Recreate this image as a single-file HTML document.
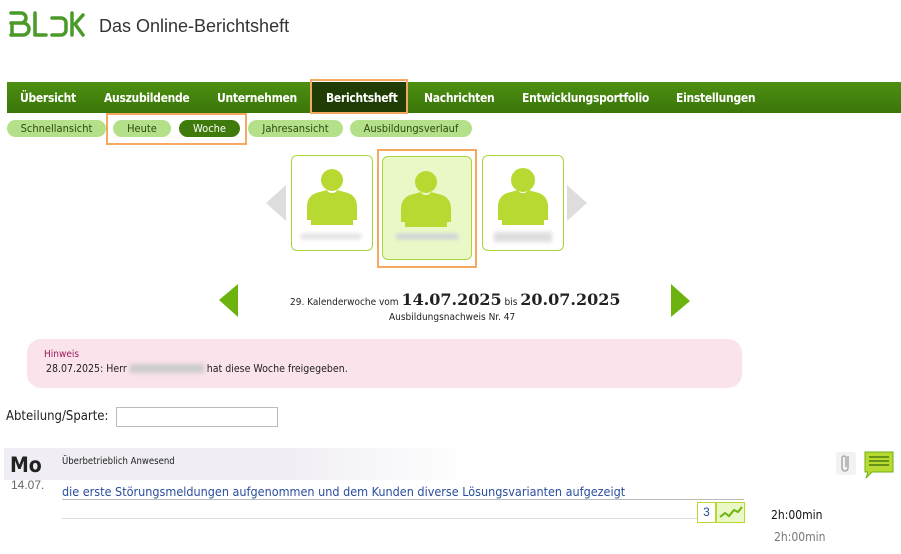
<!DOCTYPE html>
<html><head><meta charset="utf-8"><style>
body{margin:0;width:901px;height:554px;background:#fff;font-family:"DejaVu Sans","Liberation Sans",sans-serif;position:relative;overflow:hidden}
.a{position:absolute}
.nav{left:7px;top:82px;width:894px;height:31px;background:linear-gradient(#4d8f12,#3b760a)}
.nav span{position:absolute;top:9px;color:#fff;font:bold 12px "DejaVu Sans Condensed","Liberation Sans",sans-serif;letter-spacing:-0.3px}
.pill{top:120px;height:17px;border-radius:9px;background:#b5e08a;color:#2c4a10;font:11px "DejaVu Sans Condensed","Liberation Sans",sans-serif;text-align:center;line-height:17px}
.card{border:1px solid #a8d63a;border-radius:6px;background:#fff}
.small{font:10px "DejaVu Sans Condensed","Liberation Sans",sans-serif;color:#222}
</style></head><body>
<svg class="a" style="left:8px;top:11px" width="78" height="26" viewBox="0 0 78 26"><g fill="none" stroke="#4a9a2a" stroke-width="3.5" stroke-linecap="round" stroke-linejoin="round"><path d="M3 2h10a5 5 0 0 1 0 10H3M3 12h12a6 6 0 0 1 0 12H3"/><path d="M4 12v12"/><path d="M27 2v22h11"/><path d="M44 7h9a5 5 0 0 1 5 5v7a5 5 0 0 1-5 5h-9"/><path d="M64 2v22M75 4l-8 9 8 11"/></g></svg>
<div class="a" style="left:99px;top:16px;font:18px 'Liberation Sans',sans-serif;color:#333">Das Online-Berichtsheft</div>
<div class="a nav">
<span style="left:13px">Übersicht</span><span style="left:97px">Auszubildende</span><span style="left:210px">Unternehmen</span>
<span style="left:304px;top:0;height:31px;width:96px;background:#1f3d05"></span><span style="left:319px">Berichtsheft</span>
<span style="left:417px">Nachrichten</span><span style="left:515px">Entwicklungsportfolio</span><span style="left:669px">Einstellungen</span></div>
<div class="a" style="left:310px;top:79px;width:94px;height:31px;border:2px solid #f5a860"></div>
<div class="a pill" style="left:7px;width:99px">Schnellansicht</div>
<div class="a pill" style="left:113px;width:58px">Heute</div>
<div class="a pill" style="left:179px;width:61px;background:#3f7a0c;color:#fff">Woche</div>
<div class="a pill" style="left:248px;width:95px">Jahresansicht</div>
<div class="a pill" style="left:350px;width:122px">Ausbildungsverlauf</div>
<div class="a" style="left:106px;top:113px;width:137px;height:28px;border:2px solid #f5a860"></div>
<svg class="a" style="left:266px;top:185px" width="22" height="36"><path d="M20 0v36L0 18z" fill="#ddd"/></svg>
<svg class="a" style="left:567px;top:185px" width="22" height="36"><path d="M0 0v36l20-18z" fill="#ddd"/></svg>
<div class="a card" style="left:291px;top:155px;width:80px;height:94px"></div>
<div class="a" style="left:377px;top:149px;width:96px;height:115px;border:2px solid #f5a860"></div>
<div class="a card" style="left:382px;top:156px;width:88px;height:102px;background:#eaf8c8"></div>
<div class="a card" style="left:482px;top:155px;width:80px;height:94px"></div>
<svg class="a" style="left:302px;top:165px" width="60" height="60"><circle cx="30" cy="15" r="11" fill="#b8d932"/><path d="M30 28q-4 0-5-3l-11 3q-8 3-9 12v15h4v5h42v-5h4V40q-1-9-9-12l-11-3q-1 3-5 3z" fill="#b8d932"/></svg>
<svg class="a" style="left:396px;top:167px" width="60" height="60"><circle cx="30" cy="15" r="11" fill="#b8d932"/><path d="M30 28q-4 0-5-3l-11 3q-8 3-9 12v15h4v5h42v-5h4V40q-1-9-9-12l-11-3q-1 3-5 3z" fill="#b8d932"/></svg>
<svg class="a" style="left:493px;top:165px" width="60" height="60"><circle cx="30" cy="15" r="12" fill="#b8d932"/><path d="M30 28q-4 0-5-3l-11 3q-8 3-9 12v15h4v5h42v-5h4V40q-1-9-9-12l-11-3q-1 3-5 3z" fill="#b8d932"/></svg>
<div class="a" style="left:301px;top:234px;width:60px;height:5px;background:#ddd;filter:blur(2px)"></div>
<div class="a" style="left:396px;top:234px;width:62px;height:5px;background:#ccd;filter:blur(2px)"></div>
<div class="a" style="left:494px;top:232px;width:58px;height:10px;background:#ddd;filter:blur(2px)"></div>
<svg class="a" style="left:219px;top:284px" width="20" height="33"><path d="M19 0v33L0 16z" fill="#6cb310"/></svg>
<svg class="a" style="left:671px;top:284px" width="20" height="33"><path d="M0 0v33l19-16z" fill="#6cb310"/></svg>
<div class="a small" style="left:290px;top:290px;width:330px;white-space:nowrap">29. Kalenderwoche vom <b style="font:bold 16px 'DejaVu Serif','Liberation Serif',serif">14.07.2025</b> bis <b style="font:bold 16px 'DejaVu Serif','Liberation Serif',serif">20.07.2025</b></div>
<div class="a small" style="left:389px;top:312px">Ausbildungsnachweis Nr. 47</div>
<div class="a" style="left:27px;top:339px;width:715px;height:49px;background:#fae3ea;border-radius:14px"></div>
<div class="a small" style="left:44px;top:349px;color:#9b1a5a">Hinweis</div>
<div class="a small" style="left:46px;top:363px;font-size:10.5px">28.07.2025: Herr <span style="display:inline-block;width:74px;height:9px;background:#ccc;filter:blur(2px);vertical-align:-1px"></span> hat diese Woche freigegeben.</div>
<div class="a" style="left:6px;top:409px;font:13px 'DejaVu Sans Condensed','Liberation Sans',sans-serif;color:#222">Abteilung/Sparte:</div>
<div class="a" style="left:116px;top:407px;width:160px;height:18px;border:1px solid #bbb"></div>
<div class="a" style="left:4px;top:448px;width:470px;height:32px;background:linear-gradient(90deg,#f0eef4 60%,#fff)"></div>
<div class="a" style="left:10px;top:453px;font:bold 21px 'DejaVu Sans Condensed','Liberation Sans',sans-serif;color:#222">Mo</div>
<div class="a small" style="left:62px;top:456px;font-size:9.5px">Überbetrieblich Anwesend</div>
<div class="a" style="left:11px;top:478px;font:12px 'Liberation Sans',sans-serif;color:#666">14.07.</div>
<div class="a" style="left:62px;top:484px;font:12.5px 'DejaVu Sans Condensed','Liberation Sans',sans-serif;color:#2a4d9e">die erste Störungsmeldungen aufgenommen und dem Kunden diverse Lösungsvarianten aufgezeigt</div>
<div class="a" style="left:62px;top:499px;width:682px;height:1px;background:#bbb"></div>
<div class="a" style="left:62px;top:518px;width:682px;height:1px;background:#ddd"></div>
<div class="a" style="left:697px;top:502px;width:17px;height:19px;border:1px solid #b8d932;background:#fff;color:#2a4d9e;font:12px 'Liberation Sans';text-align:center;line-height:19px">3</div>
<div class="a" style="left:716px;top:502px;width:27px;height:19px;border:1px solid #b8d932;background:#eaf8c8"><svg width="27" height="19"><path d="M3 14l5-4 4 3 5-6 4 2 4-5" stroke="#6cb310" stroke-width="2" fill="none"/></svg></div>
<div class="a" style="left:771px;top:508px;font:12px 'DejaVu Sans Condensed','Liberation Sans',sans-serif;color:#111">2h:00min</div>
<div class="a" style="left:774px;top:530px;font:12px 'DejaVu Sans Condensed','Liberation Sans',sans-serif;color:#777">2h:00min</div>
<div class="a" style="left:836px;top:452px;width:20px;height:23px;background:#f2f2f2;border-radius:3px"><svg width="20" height="23"><path d="M12 4v12a3 3 0 0 1-6 0V6a2 2 0 0 1 4 0v9" stroke="#aaa" stroke-width="1.5" fill="none"/></svg></div>
<svg class="a" style="left:864px;top:451px" width="30" height="28"><path d="M1 1h28v20H8l-6 6 2-6H1z" fill="#b8d932" stroke="#6cb310"/><path d="M5 6h20M5 10h20M5 14h20" stroke="#4a7a10" stroke-width="1.5"/></svg>
</body></html>
